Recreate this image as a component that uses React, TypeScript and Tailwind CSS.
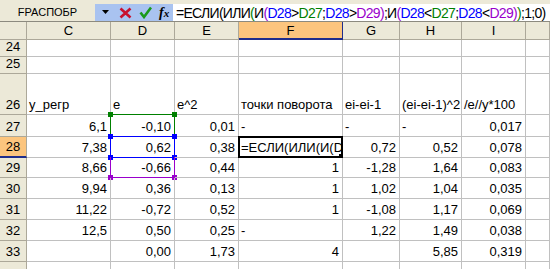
import type { ReactNode } from "react";

type Cell = { v: string; align?: "l" | "r" };

const cols = ["C", "D", "E", "F", "G", "H", "I", ""];

// строки 24..34: данные по колонкам C..J
const rows: { n: string; h: string; cells: Cell[] }[] = [
  { n: "24", h: "h-[17px]", cells: [] },
  { n: "25", h: "h-[17px]", cells: [] },
  {
    n: "26",
    h: "h-[41px]",
    cells: [
      { v: "y_регр", align: "l" },
      { v: "e", align: "l" },
      { v: "e^2", align: "l" },
      { v: "точки поворота", align: "l" },
      { v: "ei-ei-1", align: "l" },
      { v: "(ei-ei-1)^2", align: "l" },
      { v: "/e//y*100", align: "l" },
    ],
  },
  {
    n: "27",
    h: "h-[22px]",
    cells: [
      { v: "6,1" },
      { v: "-0,10" },
      { v: "0,01" },
      { v: "-", align: "l" },
      { v: "-", align: "l" },
      { v: "-", align: "l" },
      { v: "0,017" },
    ],
  },
  {
    n: "28",
    h: "h-[21px]",
    cells: [
      { v: "7,38" },
      { v: "0,62" },
      { v: "0,38" },
      { v: "" },
      { v: "0,72" },
      { v: "0,52" },
      { v: "0,078" },
    ],
  },
  {
    n: "29",
    h: "h-[20px]",
    cells: [
      { v: "8,66" },
      { v: "-0,66" },
      { v: "0,44" },
      { v: "1" },
      { v: "-1,28" },
      { v: "1,64" },
      { v: "0,083" },
    ],
  },
  {
    n: "30",
    h: "h-[21px]",
    cells: [
      { v: "9,94" },
      { v: "0,36" },
      { v: "0,13" },
      { v: "1" },
      { v: "1,02" },
      { v: "1,04" },
      { v: "0,035" },
    ],
  },
  {
    n: "31",
    h: "h-[21px]",
    cells: [
      { v: "11,22" },
      { v: "-0,72" },
      { v: "0,52" },
      { v: "1" },
      { v: "-1,08" },
      { v: "1,17" },
      { v: "0,069" },
    ],
  },
  {
    n: "32",
    h: "h-[21px]",
    cells: [
      { v: "12,5" },
      { v: "0,50" },
      { v: "0,25" },
      { v: "-", align: "l" },
      { v: "1,22" },
      { v: "1,49" },
      { v: "0,038" },
    ],
  },
  {
    n: "33",
    h: "h-[21px]",
    cells: [
      { v: "" },
      { v: "0,00" },
      { v: "1,73" },
      { v: "4" },
      { v: "" },
      { v: "5,85" },
      { v: "0,319" },
    ],
  },
  { n: "", h: "h-[20px]", cells: [] },
];

const colW = ["w-[84px]", "w-[64px]", "w-[64px]", "w-[104px]", "w-[57px]", "w-[62px]", "w-[64px]", "flex-1"];

// цветные ссылки в строке формул
const B = ({ c, children }: { c: string; children: ReactNode }) => <span className={c}>{children}</span>;
const blue = "text-[#0000ff]";
const green = "text-[#008000]";
const purple = "text-[#9900cc]";

const Corner = ({ pos, color }: { pos: string; color: string }) => (
  <span className={`absolute w-[5px] h-[5px] ${pos} ${color}`} />
);

export default function App() {
  return (
    <div className="w-[550px] h-[269px] overflow-hidden bg-white font-['Liberation_Sans',Arial,sans-serif] text-black">
      {/* строка формул */}
      <div className="h-[4px] bg-[#ece9d8]" />
      <div className="flex h-[18px] border-b border-[#8c8a7f] bg-[#ece9d8]">
        <div className="w-[95px] flex items-center justify-center text-[11px] leading-none">FРАСПОБР</div>
        <div className="w-[78px] flex items-center bg-[#a9c3f0]">
          <svg width="8" height="5" viewBox="0 0 8 5" className="ml-[7px]">
            <path d="M0 0 H7 L3.5 4 Z" fill="#000" />
          </svg>
          <svg width="13" height="12" viewBox="0 0 13 12" className="ml-[9px]">
            <path d="M1.5 1.5 L11.5 10.5 M11.5 1.5 L1.5 10.5" stroke="#c8102e" strokeWidth="2.6" />
          </svg>
          <svg width="13" height="13" viewBox="0 0 13 13" className="ml-[7px]">
            <path d="M1.5 6.5 L5 11 L12 1.5" stroke="#1a9a1a" strokeWidth="2.6" fill="none" />
          </svg>
          <span className="ml-[7px] font-['Liberation_Serif',serif] italic text-[14px] leading-none font-bold">
            f<span className="text-[11px]">x</span>
          </span>
        </div>
        <div className="flex-1 bg-white pl-[3px] flex items-center text-[14px] tracking-[-0.7px] leading-none whitespace-nowrap overflow-hidden">
          =ЕСЛИ(ИЛИ<B c={green}>(</B>И<B c={purple}>(</B>
          <B c={blue}>D28</B>&gt;<B c={green}>D27</B>;<B c={blue}>D28</B>&gt;<B c={purple}>D29</B>
          <B c={purple}>)</B>;И<B c={purple}>(</B>
          <B c={blue}>D28</B>&lt;<B c={green}>D27</B>;<B c={blue}>D28</B>&lt;<B c={purple}>D29</B>
          <B c={purple}>)</B>
          <B c={green}>)</B>;1;0)
        </div>
      </div>

      {/* заголовки столбцов */}
      <div className="flex h-[18px] text-[13px] leading-none">
        <div className="w-[27px] bg-[#ece9d8] border-r border-b border-[#aca899]" />
        {cols.map((c, i) => (
          <div
            key={i}
            className={`${colW[i]} flex items-center justify-center border-r ${
              c === "F"
                ? "bg-[#fcc57e] border-b-2 border-b-[#1f2d8c] border-r-[#1f2d8c]"
                : "bg-[#ece9d8] border-b border-[#aca899]"
            }`}
          >
            {c}
          </div>
        ))}
      </div>

      {/* строки */}
      {rows.map((r) => (
        <div key={r.n || "x"} className={`flex ${r.h} text-[13px] leading-none`}>
          <div
            className={`w-[27px] flex items-end pb-[3px] justify-center border-r border-[#aca899] ${
              r.n === "28" ? "bg-[#fcc57e] border-b-2 border-b-[#1f2d8c]" : "bg-[#ece9d8] border-b"
            }`}
          >
            {r.n}
          </div>
          {cols.map((_, i) => {
            const cell = r.cells[i];
            const left = cell?.align === "l";
            return (
              <div
                key={i}
                className={`${colW[i]} relative flex items-end pb-[3px] border-r border-b border-[#c0c0c0] whitespace-nowrap ${
                  left ? "justify-start pl-[2px]" : "justify-end pr-[3px]"
                }`}
              >
                {cell?.v}
                {i === 1 && r.n === "27" && (
                  <span className="absolute -left-px -top-px -right-px -bottom-px border border-[#008000]">
                    <Corner pos="-left-[3px] -top-[3px]" color="bg-[#008000]" />
                    <Corner pos="-right-[3px] -top-[3px]" color="bg-[#008000]" />
                  </span>
                )}
                {i === 1 && r.n === "28" && (
                  <span className="absolute -left-px -top-px -right-px -bottom-px border border-[#0000ff]">
                    <Corner pos="-left-[3px] -top-[3px]" color="bg-[#0000ff]" />
                    <Corner pos="-right-[3px] -top-[3px]" color="bg-[#0000ff]" />
                    <Corner pos="-left-[3px] -bottom-[3px]" color="bg-[#0000ff]" />
                    <Corner pos="-right-[3px] -bottom-[3px]" color="bg-[#0000ff]" />
                  </span>
                )}
                {i === 1 && r.n === "29" && (
                  <span className="absolute -left-px -top-px -right-px -bottom-px border border-[#9900cc] border-t-0">
                    <Corner pos="-left-[3px] -bottom-[3px]" color="bg-[#9900cc]" />
                    <Corner pos="-right-[3px] -bottom-[3px]" color="bg-[#9900cc]" />
                  </span>
                )}
                {i === 3 && r.n === "28" && (
                  <span className="absolute -left-px -top-px -right-px -bottom-px border-2 border-black bg-white flex items-end pb-[2px] pl-[1px] overflow-hidden">
                    =ЕСЛИ(ИЛИ(И(D
                    <span className="absolute -right-[3px] -bottom-[3px] w-[6px] h-[6px] bg-black border border-white" />
                  </span>
                )}
              </div>
            );
          })}
        </div>
      ))}
    </div>
  );
}
